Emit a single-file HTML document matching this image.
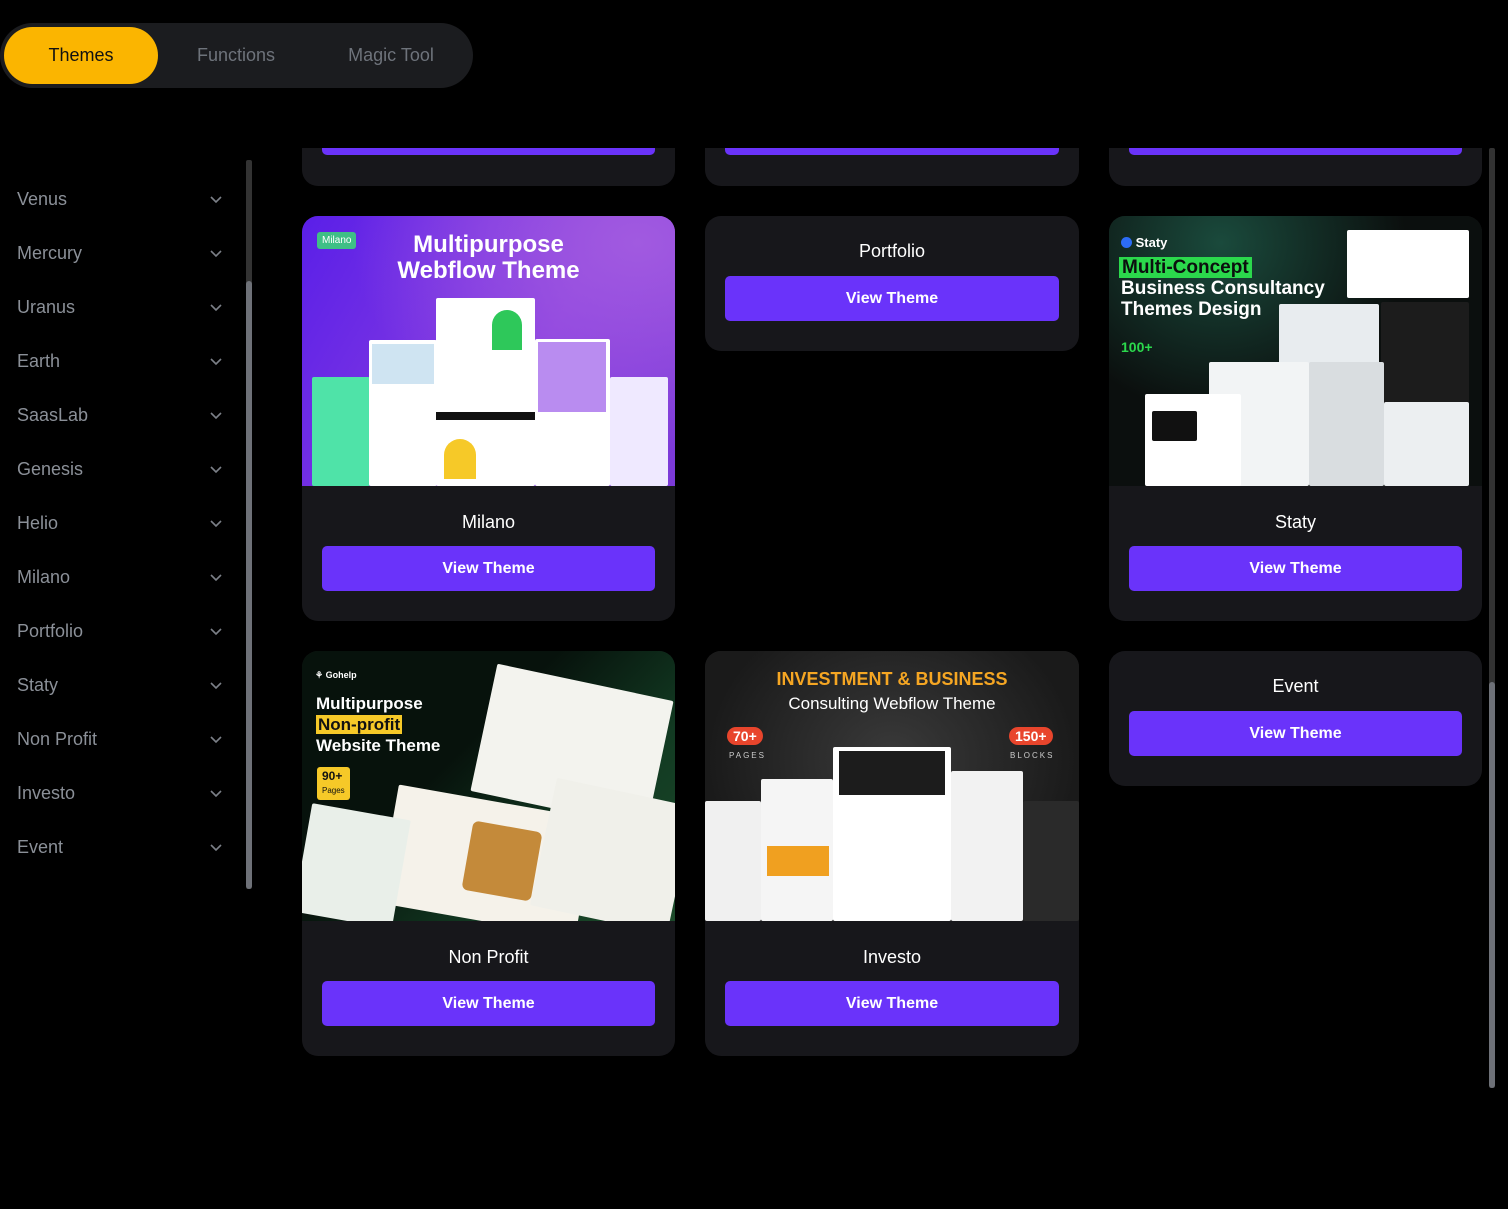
<!DOCTYPE html>
<html><head><meta charset="utf-8"><style>
*{box-sizing:border-box;margin:0;padding:0}
body{width:1508px;height:1209px;background:#000;font-family:"Liberation Sans",sans-serif;position:relative;overflow:hidden}
.tabs{position:absolute;left:0;top:23px;width:473px;height:65px;background:#1b1c1f;border-radius:33px}
.tab{position:absolute;top:4px;height:57px;line-height:57px;text-align:center;font-size:18px;color:#6e737b}
.tab.on{left:4px;width:154px;background:#fbb500;color:#111;border-radius:29px}
.item{position:absolute;left:17px;font-size:18px;color:#8b9098;width:210px}
.item svg{position:absolute;right:4px;top:6px}
.bar{position:absolute;background:#333;border-radius:2px}
.thumb{position:absolute;background:#6e7178;border-radius:3px}
.card{position:absolute;background:#17171b;border-radius:16px;overflow:hidden}
.card .t{position:absolute;left:0;right:0;text-align:center;color:#fff;font-size:18px}
.btn{position:absolute;left:20px;right:20px;height:45px;background:#6a33fa;border-radius:5px;color:#fff;font-weight:bold;font-size:16px;text-align:center;line-height:45px}
.img{position:absolute;left:0;top:0;right:0;height:270px;overflow:hidden}
.pg{position:absolute;background:#fff;border-radius:2px}
</style></head><body>
<div class="tabs">
<div class="tab on">Themes</div>
<div class="tab" style="left:160px;width:152px">Functions</div>
<div class="tab" style="left:314px;width:154px">Magic Tool</div>
</div>

<div class="item" style="top:189px">Venus<svg width="14" height="9" viewBox="0 0 14 9"><path d="M2 2l5 5 5-5" stroke="#7c8088" stroke-width="1.6" fill="none"/></svg></div>
<div class="item" style="top:243px">Mercury<svg width="14" height="9" viewBox="0 0 14 9"><path d="M2 2l5 5 5-5" stroke="#7c8088" stroke-width="1.6" fill="none"/></svg></div>
<div class="item" style="top:297px">Uranus<svg width="14" height="9" viewBox="0 0 14 9"><path d="M2 2l5 5 5-5" stroke="#7c8088" stroke-width="1.6" fill="none"/></svg></div>
<div class="item" style="top:351px">Earth<svg width="14" height="9" viewBox="0 0 14 9"><path d="M2 2l5 5 5-5" stroke="#7c8088" stroke-width="1.6" fill="none"/></svg></div>
<div class="item" style="top:405px">SaasLab<svg width="14" height="9" viewBox="0 0 14 9"><path d="M2 2l5 5 5-5" stroke="#7c8088" stroke-width="1.6" fill="none"/></svg></div>
<div class="item" style="top:459px">Genesis<svg width="14" height="9" viewBox="0 0 14 9"><path d="M2 2l5 5 5-5" stroke="#7c8088" stroke-width="1.6" fill="none"/></svg></div>
<div class="item" style="top:513px">Helio<svg width="14" height="9" viewBox="0 0 14 9"><path d="M2 2l5 5 5-5" stroke="#7c8088" stroke-width="1.6" fill="none"/></svg></div>
<div class="item" style="top:567px">Milano<svg width="14" height="9" viewBox="0 0 14 9"><path d="M2 2l5 5 5-5" stroke="#7c8088" stroke-width="1.6" fill="none"/></svg></div>
<div class="item" style="top:621px">Portfolio<svg width="14" height="9" viewBox="0 0 14 9"><path d="M2 2l5 5 5-5" stroke="#7c8088" stroke-width="1.6" fill="none"/></svg></div>
<div class="item" style="top:675px">Staty<svg width="14" height="9" viewBox="0 0 14 9"><path d="M2 2l5 5 5-5" stroke="#7c8088" stroke-width="1.6" fill="none"/></svg></div>
<div class="item" style="top:729px">Non Profit<svg width="14" height="9" viewBox="0 0 14 9"><path d="M2 2l5 5 5-5" stroke="#7c8088" stroke-width="1.6" fill="none"/></svg></div>
<div class="item" style="top:783px">Investo<svg width="14" height="9" viewBox="0 0 14 9"><path d="M2 2l5 5 5-5" stroke="#7c8088" stroke-width="1.6" fill="none"/></svg></div>
<div class="item" style="top:837px">Event<svg width="14" height="9" viewBox="0 0 14 9"><path d="M2 2l5 5 5-5" stroke="#7c8088" stroke-width="1.6" fill="none"/></svg></div>

<div class="bar" style="left:246px;top:160px;width:6px;height:729px"></div>
<div class="thumb" style="left:246px;top:281px;width:6px;height:608px"></div>
<div class="bar" style="left:1489px;top:148px;width:6px;height:940px"></div>
<div class="thumb" style="left:1489px;top:682px;width:6px;height:406px"></div>

<div class="card" style="left:302px;top:148px;width:373px;height:38px;border-radius:0 0 16px 16px"><div class="btn" style="top:-38px"></div></div>
<div class="card" style="left:705px;top:148px;width:374px;height:38px;border-radius:0 0 16px 16px"><div class="btn" style="top:-38px"></div></div>
<div class="card" style="left:1109px;top:148px;width:373px;height:38px;border-radius:0 0 16px 16px"><div class="btn" style="top:-38px"></div></div>

<div class="card" style="left:302px;top:216px;width:373px;height:405px">
<div class="img" style="background:radial-gradient(ellipse at 90% 10%,#a15ae0,transparent 60%),linear-gradient(120deg,#5a1fe8,#8a3fe0 60%,#7b3ad8)">
<div style="position:absolute;left:15px;top:16px;background:#3fbf86;color:#fff;font-size:10px;padding:3px 5px;border-radius:3px">Milano</div>
<div style="position:absolute;left:0;right:0;top:16px;text-align:center;color:#fff;font-size:24px;font-weight:bold;line-height:26px">Multipurpose<br>Webflow Theme</div>
<div class="pg" style="left:10px;top:161px;width:58px;height:109px;background:#4fe3a8"></div>
<div class="pg" style="left:67px;top:124px;width:68px;height:146px"></div>
<div class="pg" style="left:134px;top:82px;width:99px;height:188px"></div>
<div class="pg" style="left:233px;top:123px;width:75px;height:147px"></div>
<div class="pg" style="left:308px;top:161px;width:58px;height:109px;background:#efe9ff"></div>
<div style="position:absolute;left:70px;top:128px;width:62px;height:40px;background:#cfe4f2"></div>
<div style="position:absolute;left:134px;top:196px;width:99px;height:8px;background:#111"></div>
<div style="position:absolute;left:236px;top:126px;width:68px;height:70px;background:#b98cf0"></div>
<div style="position:absolute;left:142px;top:223px;width:32px;height:40px;background:#f6c928;border-radius:16px 16px 0 0"></div>
<div style="position:absolute;left:190px;top:94px;width:30px;height:40px;background:#2ec85a;border-radius:15px 15px 0 0"></div>
</div>
<div class="t" style="top:296px">Milano</div>
<div class="btn" style="top:330px">View Theme</div>
</div>

<div class="card" style="left:705px;top:216px;width:374px;height:135px">
<div class="t" style="top:25px">Portfolio</div>
<div class="btn" style="top:60px">View Theme</div>
</div>

<div class="card" style="left:1109px;top:216px;width:373px;height:405px">
<div class="img" style="background:radial-gradient(ellipse at 30% 10%,#1a4a3c,transparent 50%),#0b0f0e">
<div style="position:absolute;left:12px;top:19px;color:#fff;font-size:13px;font-weight:bold"><span style="display:inline-block;width:11px;height:11px;background:#2c6cf6;border-radius:50%;vertical-align:-1px"></span> Staty</div>
<div style="position:absolute;left:10px;top:41px;background:#2bd84c;color:#0b0f0e;font-size:19px;font-weight:bold;padding:0 3px;line-height:21px">Multi-Concept</div>
<div style="position:absolute;left:12px;top:62px;color:#fff;font-size:19px;font-weight:bold;line-height:21px">Business Consultancy<br>Themes Design</div>
<div style="position:absolute;left:12px;top:123px;color:#2bd84c;font-size:14px;font-weight:bold">100+</div>
<div class="pg" style="left:238px;top:14px;width:122px;height:68px"></div>
<div class="pg" style="left:170px;top:88px;width:100px;height:60px;background:#e8ecef"></div>
<div class="pg" style="left:272px;top:86px;width:88px;height:160px;background:#1c1c1c"></div>
<div class="pg" style="left:100px;top:146px;width:100px;height:124px;background:#f2f4f5"></div>
<div class="pg" style="left:36px;top:178px;width:96px;height:92px"></div>
<div class="pg" style="left:200px;top:146px;width:75px;height:124px;background:#d9dde0"></div>
<div class="pg" style="left:275px;top:186px;width:85px;height:84px;background:#eceff1"></div>
<div class="pg" style="left:43px;top:195px;width:45px;height:30px;background:#111"></div>
</div>
<div class="t" style="top:296px">Staty</div>
<div class="btn" style="top:330px">View Theme</div>
</div>

<div class="card" style="left:302px;top:651px;width:373px;height:405px">
<div class="img" style="background:linear-gradient(135deg,#07120c 40%,#123a22 70%,#1c4a2a)">
<div style="position:absolute;left:13px;top:19px;color:#fff;font-size:9px;font-weight:bold">⚘ Gohelp</div>
<div style="position:absolute;left:14px;top:42px;color:#fff;font-size:17px;font-weight:bold;line-height:21px">Multipurpose<br><span style="background:#f6c928;color:#111;padding:0 2px">Non-profit</span><br>Website Theme</div>
<div style="position:absolute;left:15px;top:116px;background:#f6c928;color:#111;font-size:12px;font-weight:bold;padding:3px 5px;border-radius:3px;line-height:13px">90+<br><span style="font-size:8px;font-weight:normal">Pages</span></div>
<div class="pg" style="left:180px;top:30px;width:180px;height:130px;background:#f3f3ee;transform:rotate(12deg)"></div>
<div class="pg" style="left:85px;top:150px;width:200px;height:120px;background:#f5f2ea;transform:rotate(10deg)"></div>
<div class="pg" style="left:240px;top:140px;width:140px;height:130px;background:#f0f0ea;transform:rotate(12deg)"></div>
<div class="pg" style="left:0;top:160px;width:100px;height:110px;background:#e9efe9;transform:rotate(10deg)"></div>
<div style="position:absolute;left:165px;top:175px;width:70px;height:70px;background:#c48a3a;border-radius:6px;transform:rotate(10deg)"></div>
</div>
<div class="t" style="top:296px">Non Profit</div>
<div class="btn" style="top:330px">View Theme</div>
</div>

<div class="card" style="left:705px;top:651px;width:374px;height:405px">
<div class="img" style="background:radial-gradient(ellipse at 50% 40%,#3a3a3a,#1a1a1a 70%)">
<div style="position:absolute;left:0;right:0;top:18px;text-align:center;color:#f5a623;font-size:18px;font-weight:bold">INVESTMENT &amp; BUSINESS</div>
<div style="position:absolute;left:0;right:0;top:43px;text-align:center;color:#fff;font-size:17px">Consulting Webflow Theme</div>
<div style="position:absolute;left:22px;top:76px;background:#e8452c;color:#fff;font-size:14px;font-weight:bold;padding:1px 6px;border-radius:9px">70+</div>
<div style="position:absolute;left:24px;top:100px;color:#ccc;font-size:8px;letter-spacing:2px">PAGES</div>
<div style="position:absolute;left:304px;top:76px;background:#e8452c;color:#fff;font-size:14px;font-weight:bold;padding:1px 6px;border-radius:9px">150+</div>
<div style="position:absolute;left:305px;top:100px;color:#ccc;font-size:8px;letter-spacing:2px">BLOCKS</div>
<div class="pg" style="left:0;top:150px;width:56px;height:120px;background:#f0f0f0"></div>
<div class="pg" style="left:56px;top:128px;width:72px;height:142px;background:#f5f5f5"></div>
<div class="pg" style="left:128px;top:96px;width:118px;height:174px;background:#fff"></div>
<div class="pg" style="left:246px;top:120px;width:72px;height:150px;background:#f2f2f2"></div>
<div class="pg" style="left:318px;top:150px;width:56px;height:120px;background:#2a2a2a"></div>
<div style="position:absolute;left:134px;top:100px;width:106px;height:44px;background:#1c1c1c"></div>
<div style="position:absolute;left:62px;top:195px;width:62px;height:30px;background:#f0a020"></div>
</div>
<div class="t" style="top:296px">Investo</div>
<div class="btn" style="top:330px">View Theme</div>
</div>

<div class="card" style="left:1109px;top:651px;width:373px;height:135px">
<div class="t" style="top:25px">Event</div>
<div class="btn" style="top:60px">View Theme</div>
</div>
</body></html>
